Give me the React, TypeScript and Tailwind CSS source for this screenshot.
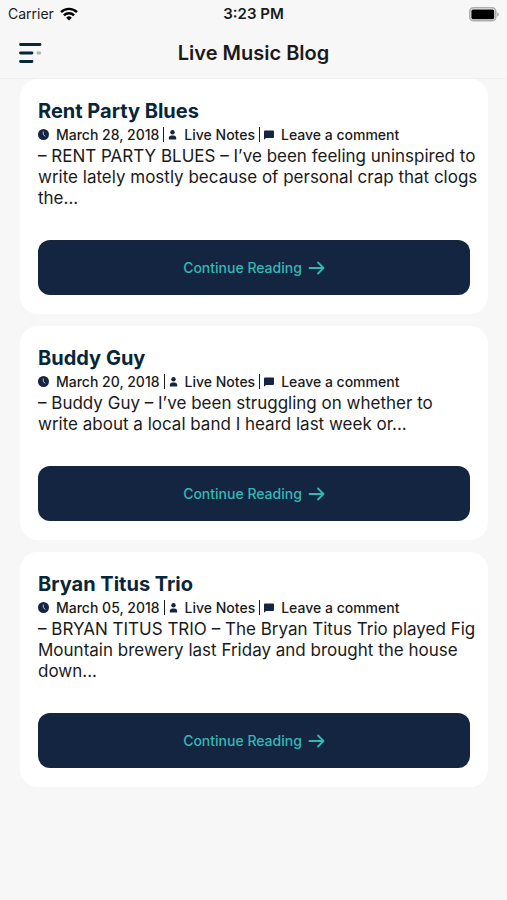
interface Post {
  id: number;
  title: string;
  date: string;
  author: string;
  excerpt: string;
}

const posts: Post[] = [
  {
    id: 1,
    title: 'Rent Party Blues',
    date: 'March 28, 2018',
    author: 'Live Notes',
    excerpt:
      '– RENT PARTY BLUES – I’ve been feeling uninspired to write lately mostly because of personal crap that clogs the...',
  },
  {
    id: 2,
    title: 'Buddy Guy',
    date: 'March 20, 2018',
    author: 'Live Notes',
    excerpt: '– Buddy Guy – I’ve been struggling on whether to\nwrite about a local band I heard last week or...',
  },
  {
    id: 3,
    title: 'Bryan Titus Trio',
    date: 'March 05, 2018',
    author: 'Live Notes',
    excerpt:
      '– BRYAN TITUS TRIO – The Bryan Titus Trio played Fig Mountain brewery last Friday and brought the house down...',
  },
];

export default function App() {
  return (
    <div className="min-h-screen bg-[#f7f7f7] font-['Inter',sans-serif] text-[#1a1a1a]">
      <StatusBar />
      <Header title="Live Music Blog" />
      <main className="flex flex-col gap-3 pr-[19px] pl-5">
        {posts.map((post) => (
          <PostCard key={post.id} post={post} />
        ))}
      </main>
    </div>
  );
}

function StatusBar() {
  return (
    <div className="grid h-7 grid-cols-3 items-center px-2 text-[15px]">
      <div className="flex items-center gap-1.5">
        <span className="text-sm">Carrier</span>
        <WifiIcon />
      </div>
      <span className="text-center font-semibold">3:23 PM</span>
      <div className="flex justify-end">
        <BatteryIcon />
      </div>
    </div>
  );
}

function Header({ title }: { title: string }) {
  return (
    <header className="grid h-[51px] grid-cols-[24px_1fr_24px] items-center border-b border-[#f0f0f0] px-[18px]">
      <button type="button" aria-label="Open menu">
        <MenuIcon />
      </button>
      <h1 className="text-center text-xl font-semibold">{title}</h1>
    </header>
  );
}

function PostCard({ post }: { post: Post }) {
  return (
    <article className="rounded-[18px] bg-white px-[18px] pb-[19px] pt-5">
      <h2 className="text-xl leading-6 font-bold text-[#06263a]">{post.title}</h2>
      <div className="flex h-[23px] items-center gap-1 text-sm font-medium">
        <span className="flex items-center gap-[7px]">
          <ClockIcon />
          {post.date}
        </span>
        <Divider />
        <span className="flex items-center gap-[7px]">
          <UserIcon />
          {post.author}
        </span>
        <Divider />
        <a href="#comments" className="flex items-center gap-[7px]">
          <CommentIcon />
          Leave a comment
        </a>
      </div>
      {/* text runs slightly into the card padding */}
      <p className="-mr-3 text-[17px] leading-[21px] whitespace-pre-line">{post.excerpt}</p>
      <a
        href="#read"
        className="mt-[31px] flex h-[55px] items-center justify-center gap-1.5 rounded-xl bg-[#142542] text-sm font-medium text-[#35b8b3]"
      >
        Continue Reading
        <ArrowIcon />
      </a>
    </article>
  );
}

function Divider() {
  return <span className="h-[15px] w-px bg-[#1a1a1a]" />;
}

function WifiIcon() {
  return (
    <svg width="18" height="14" viewBox="0 0 18 14" fill="none" stroke="#000" strokeWidth="2.4">
      <path d="M1 5.2a11.4 11.4 0 0 1 16 0" />
      <path d="M3.9 8.3a7.2 7.2 0 0 1 10.2 0" />
      <path d="M9 13.6 6.2 10.7a4 4 0 0 1 5.6 0Z" fill="#000" stroke="none" />
    </svg>
  );
}

function BatteryIcon() {
  return (
    <svg width="30" height="15" viewBox="0 0 30 15">
      <rect x="0.8" y="0.8" width="26" height="13" rx="3.8" fill="#f7f7f7" stroke="#adadad" strokeWidth="1.6" />
      <rect x="2.4" y="2.4" width="22.8" height="9.8" rx="1.6" fill="#000" />
      <path d="M28.2 5.2c2.2 1 2.2 3.4 0 4.4Z" fill="#adadad" />
    </svg>
  );
}

function MenuIcon() {
  return (
    <svg width="24" height="22" viewBox="0 0 24 22" fill="none" strokeWidth="2.8" strokeLinecap="round">
      <path d="M2.500 2.500h19.500M2.500 11h11.500M2.500 19.500h11.500" stroke="#06263a" />
      <path d="M19.800 11h2" stroke="#a9b8b5" />
    </svg>
  );
}

function ClockIcon() {
  return (
    <svg width="11" height="11" viewBox="0 0 11 11" fill="none">
      <circle cx="5.5" cy="5.5" r="5.5" fill="#142542" />
      <path d="M5.3 2.5v3.2l2 1.6" stroke="#b8bfcc" strokeWidth="1" />
    </svg>
  );
}

function UserIcon() {
  return (
    <svg width="9" height="10" viewBox="0 0 9 10" fill="#142542">
      <circle cx="4.5" cy="2.3" r="2.2" />
      <path d="M0.8 9.6V8c0-1.5 1.2-2.5 2.6-2.5h2.2C7 5.5 8.2 6.5 8.2 8v1.6Z" />
    </svg>
  );
}

function CommentIcon() {
  return (
    <svg width="10" height="10" viewBox="0 0 10 10" fill="#142542">
      <path d="M1 0.5h8q1 0 1 1V7q0 1-1 1H2L0 9.800V1.500q0-1 1-1Z" />
    </svg>
  );
}

function ArrowIcon() {
  return (
    <svg
      width="17"
      height="14"
      viewBox="0 0 17 14"
      fill="none"
      stroke="currentColor"
      strokeWidth="1.8"
      strokeLinecap="round"
      strokeLinejoin="round"
    >
      <path d="M1.500 7h14M10 1.500 15.500 7 10 12.500" />
    </svg>
  );
}
